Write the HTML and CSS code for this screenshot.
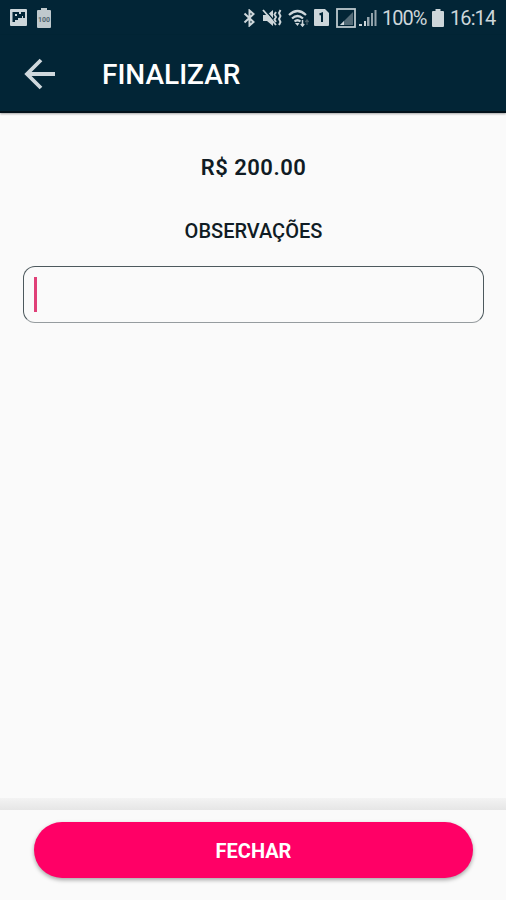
FILE: index.html
```html
<!DOCTYPE html>
<html lang="pt-BR">
<head>
    <meta charset="utf-8">
    <meta name="viewport" content="width=device-width, initial-scale=1">
    <title>Finalizar</title>
    <link rel="stylesheet" href="styles.css">
</head>
<body>
    <div class="status-bar">
        <div class="status-left">
            <svg width="17" height="17" viewBox="0 0 17 17">
                <rect width="17" height="17" rx="1" fill="#cdd6da"/>
                <path d="M2.500 3H9v2h2V3h4v6h-2V7h-1v2H8v2H5v2H2.500zM5 5v2h2V5z" fill="#022536" fill-rule="evenodd"/>
            </svg>
            <svg class="battery-saver" width="14" height="20" viewBox="0 0 14 20">
                <path d="M4 0h6v2h3q1 0 1 1v16q0 1-1 1H1q-1 0-1-1V3q0-1 1-1h3z" fill="#bfc9cd"/>
                <text class="battery-label" x="7" y="13.5" text-anchor="middle">100</text>
            </svg>
        </div>
        <div class="status-right">
            <!-- bluetooth -->
            <svg width="13" height="18" viewBox="0 0 13 18" fill="none" stroke="#cdd6da" stroke-width="2">
                <path d="M1.500 4.500l9 8.500-4 3.500V1.500l4 3.500-9 8.500"/>
            </svg>
            <!-- vibrate / mute -->
            <svg class="mute" width="21" height="18" viewBox="0 0 21 18">
                <path d="M1 6h4l6-5v16l-6-5H1z" fill="#cdd6da"/>
                <path d="M3 1l12 14" stroke="#022536" stroke-width="1.500"/>
                <path d="M1 1l13 15M14 3l-1.500 2.500 1.500 2.500-1.500 2.500 1.500 2.500M18.500 1l-1.500 3 1.500 3-1.500 3 1.500 3-1.500 3" fill="none" stroke="#cdd6da" stroke-width="1.900"/>
            </svg>
            <!-- wifi -->
            <svg class="wifi" width="22" height="18" viewBox="0 0 22 18">
                <path d="M1 6q8.500-8 17 0M4 9.500q5.500-5 11 0M6.500 12.500q3-2.500 6 0" fill="none" stroke="#cdd6da" stroke-width="2.200"/>
                <path d="M7 14h4.500l-2 3z" fill="#cdd6da"/>
                <path d="M14.500 11v6M12.800 15l1.700 2 1.700-2" fill="none" stroke="#cdd6da" stroke-width="1.500"/>
                <path d="M19 16v-5M17.300 13l1.700-2 1.700 2" fill="none" stroke="#4d626d" stroke-width="1.200"/>
            </svg>
            <!-- sim 1 -->
            <svg class="sim" width="15" height="17" viewBox="0 0 15 17">
                <path d="M1 0h10l4 4v12q0 1-1 1H1q-1 0-1-1V1q0-1 1-1z" fill="#cdd6da"/>
                <path d="M5.500 5.500l2.500-1V13" fill="none" stroke="#022536" stroke-width="2"/>
            </svg>
            <svg class="roaming" width="20" height="20" viewBox="0 0 20 20">
                <rect x="1" y="1" width="18" height="18" fill="none" stroke="#bcc8cd" stroke-width="1.800"/>
                <path d="M4 17L17 4v13z" fill="#536a76"/>
                <path d="M4 17l4-4v4z" fill="#cdd6da"/>
            </svg>
            <svg class="signal" width="18" height="18" viewBox="0 0 18 18">
                <path d="M0 17v-2h3v2zM5 17v-5h2v5z" fill="#cdd6da"/>
                <path d="M8 17V8h2.500v9zM12 17V4h2v13zM15.500 17V1h2v16z" fill="#94a4ac"/>
            </svg>
            <span class="percent">100%</span>
            <svg class="battery" width="12" height="18" viewBox="0 0 12 18">
                <path d="M3.500 0h5v2H11q1 0 1 1v14q0 1-1 1H1q-1 0-1-1V3q0-1 1-1h2.500z" fill="#cdd6da"/>
            </svg>
            <span class="clock">16:14</span>
        </div>
    </div>

    <div class="toolbar">
        <svg class="back" width="32" height="32" viewBox="0 0 32 32" fill="none" stroke="#cfd8dd" stroke-width="3.800">
            <path d="M17 2L3 16l14 14M3 16h28"/>
        </svg>
        <h1>FINALIZAR</h1>
    </div>

    <div class="content">
        <p class="total">R$ 200.00</p>
        <label class="label" for="obs">OBSERVAÇÕES</label>
        <div class="field" id="obs" role="textbox">
            <span class="caret"></span>
        </div>
    </div>

    <div class="footer-shadow"></div>
    <div class="footer">
        <button class="close-button">FECHAR</button>
    </div>
</body>
</html>
```
FILE: styles.css
```css
* {
    box-sizing: border-box;
}
body {
    margin: 0;
    height: 900px;
    display: flex;
    flex-direction: column;
    overflow: hidden;
    background-color: #fafafa;
    color: #101c24;
    font-family: Roboto, "Liberation Sans", sans-serif;
}
svg {
    display: block;
    flex: none;
}
.status-bar {
    flex: none;
    height: 35px;
    padding: 0 10px;
    display: flex;
    align-items: center;
    justify-content: space-between;
    background-color: #022536;
    color: #cdd6da;
}
.status-left,
.status-right {
    display: flex;
    align-items: center;
}
.battery-saver {
    margin-left: 10px;
}
.battery-label {
    font-size: 7px;
    font-weight: 700;
    fill: #52666f;
}
.mute {
    margin-left: 6px;
}
.wifi {
    margin-left: 5px;
}
.sim {
    margin-left: 4px;
}
.roaming {
    margin-left: 7px;
}
.signal {
    margin-left: 3px;
}
.percent,
.clock {
    padding-top: 2px;
    font-size: 20px;
    line-height: 33px;
    white-space: nowrap;
}
.percent {
    width: 44px;
    margin-left: 5px;
    letter-spacing: -1px;
}
.battery {
    margin-left: 6px;
}
.clock {
    width: 46px;
    margin-left: 6px;
    letter-spacing: -0.9px;
}
.toolbar {
    flex: none;
    height: 78px;
    padding: 2px 0 0 24px;
    display: flex;
    align-items: center;
    background-color: #022536;
    border-bottom: 2px solid #02111a;
    box-shadow: 0 1px 2px rgba(0, 0, 0, 0.35);
}
h1 {
    margin: 2px 0 0 46px;
    color: #fff;
    font-size: 28px;
    font-weight: 500;
    line-height: 32px;
}
.content {
    flex: 1;
    padding: 41px 22px 0 23px;
    display: flex;
    flex-direction: column;
    align-items: center;
}
.total {
    margin: 0;
    font-size: 22px;
    font-weight: 600;
    line-height: 28px;
    letter-spacing: 0.5px;
}
.label {
    margin-top: 37px;
    font-size: 20px;
    font-weight: 500;
    line-height: 24px;
}
.field {
    width: 100%;
    height: 57px;
    margin-top: 23px;
    padding: 0 10px;
    display: flex;
    align-items: center;
    border: 1.5px solid #4d595d;
    border-bottom-color: #969c9f;
    border-radius: 12px;
}
.caret {
    width: 3px;
    height: 35px;
    background-color: #e04078;
}
.footer-shadow {
    flex: none;
    height: 12px;
    background: linear-gradient(#f3f3f3, #e6e6e6);
}
.footer {
    flex: none;
    height: 90px;
    padding: 12px 33px 0 34px;
}
.close-button {
    width: 100%;
    height: 56px;
    padding: 2px 0 0;
    border: none;
    border-radius: 28px;
    background-color: #ff0066;
    box-shadow: 0 2px 4px rgba(0, 0, 0, 0.35);
    color: #fff;
    font-family: inherit;
    font-size: 20px;
    font-weight: 700;
}
```
